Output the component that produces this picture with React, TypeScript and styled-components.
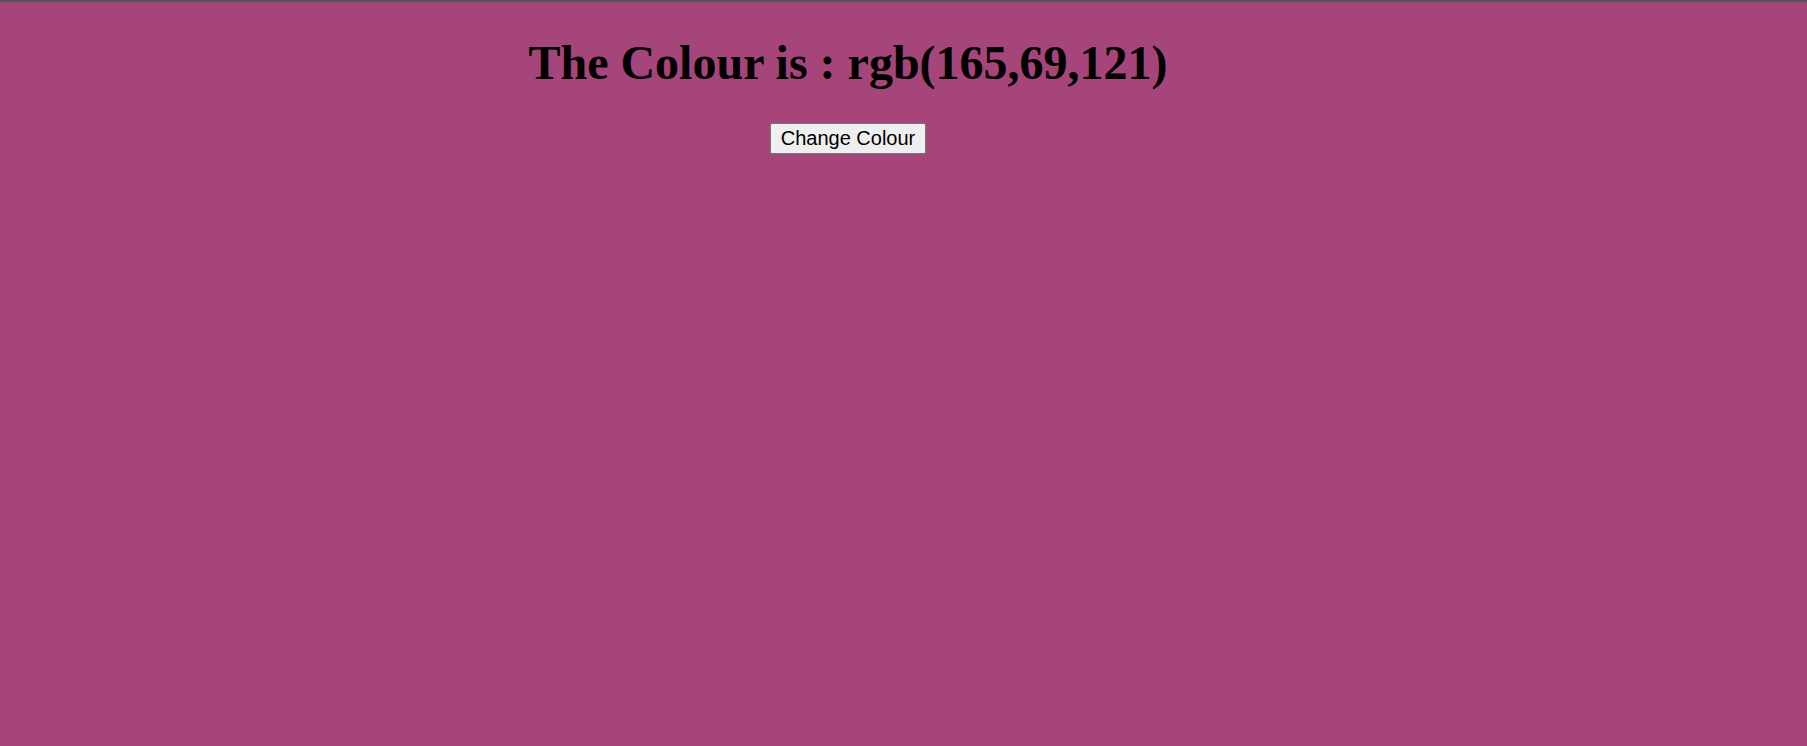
import React, { useState } from "react";
import styled, { createGlobalStyle } from "styled-components";

const Global = createGlobalStyle`
  html, body { margin: 0; padding: 0; }
  body {
    background: #a54579;
    border-top: 2px solid #565656;
    min-height: 744px;
  }
`;

const Page = styled.div<{ $bg: string }>`
  background: ${(p) => p.$bg};
  width: 1680px;
  margin-left: 8px;
  padding-top: 1px;
  text-align: center;
`;

const Title = styled.h1`
  font-family: "Liberation Serif", "Times New Roman", serif;
  font-weight: 700;
  font-size: 48px;
  color: #000;
  margin: 32px 0 33px;
`;

const Button = styled.button`
  font-family: "Liberation Sans", Arial, sans-serif;
  font-size: 20px;
  color: #000;
  background: #efefef;
  border: 1px solid #767676;
  border-radius: 2px;
  padding: 3px 10px;
  cursor: pointer;
`;

export default function App() {
  const [rgb, setRgb] = useState([165, 69, 121]);
  const change = () =>
    setRgb([0, 0, 0].map(() => Math.floor(Math.random() * 256)));
  const colour = `rgb(${rgb.join(",")})`;
  return (
    <>
      <Global />
      <Page $bg={colour}>
        <Title>The Colour is : {colour}</Title>
        <Button onClick={change}>Change Colour</Button>
      </Page>
    </>
  );
}
